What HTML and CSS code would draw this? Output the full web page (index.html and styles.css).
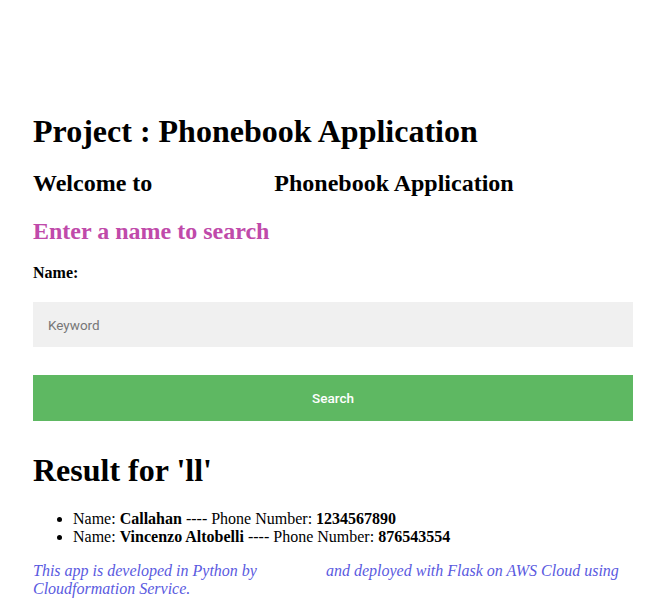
FILE: index.html
```html
<!DOCTYPE html>
<html>
<head>
<meta charset="utf-8">
<link rel="stylesheet" href="styles.css">
</head>
<body>
<div class="page">
  <h1 class="title">Project : Phonebook Application</h1>
  <h2 class="welcome">Welcome to <span class="gap-lg"></span> Phonebook Application</h2>
  <h3 class="prompt">Enter a name to search</h3>
  <form class="search">
    <label class="label">Name:</label>
    <input class="field" type="text" placeholder="Keyword">
    <button class="btn" type="button">Search</button>
  </form>
  <h1 class="result">Result for 'll'</h1>
  <ul class="list">
    <li>Name: <b>Callahan</b> ---- Phone Number: <b>1234567890</b></li>
    <li>Name: <b>Vincenzo Altobelli</b> ---- Phone Number: <b>876543554</b></li>
  </ul>
  <p class="footer">This app is developed in Python by<span class="gap-sm"></span>and deployed with Flask on AWS Cloud using Cloudformation Service.</p>
</div>
</body>
</html>
```

FILE: styles.css
```css
html, body {
  margin: 0;
  padding: 0;
  background: #fff;
}
body {
  font-family: "Liberation Serif", "Times New Roman", serif;
  color: #000;
}
.page {
  width: 600px;
  padding: 92px 0 0 33px;
}
.title {
  font-size: 32px;
  margin: 21px 0 20px;
}
.welcome {
  font-size: 24px;
  margin: 20px 0 21px;
}
.gap-lg {
  display: inline-block;
  width: 110px;
}
.prompt {
  font-size: 24px;
  color: #c04aaa;
  margin: 20px 0 19px;
}
.search {
  display: flex;
  flex-direction: column;
}
.label {
  font-weight: bold;
  font-size: 16px;
  margin: 0 0 20px;
}
.field {
  height: 45px;
  box-sizing: border-box;
  border: none;
  background: #f0f0f0;
  padding: 0 15px;
  font-family: Roboto, "Liberation Sans", Arial, sans-serif;
  font-size: 13.5px;
  outline: none;
}
.field::placeholder {
  color: #777;
}
.btn {
  margin-top: 28px;
  height: 46px;
  border: none;
  background: #5eb862;
  color: #fff;
  font-family: Roboto, "Liberation Sans", Arial, sans-serif;
  font-size: 13.5px;
  font-weight: 500;
}
.result {
  font-size: 32px;
  margin: 31px 0 21px;
}
.list {
  margin: 16px 0;
  padding-left: 40px;
  font-size: 16px;
}
.footer {
  font-style: italic;
  font-size: 16px;
  color: #5a5adf;
  margin: 16px 0;
}
.gap-sm {
  display: inline-block;
  width: 69px;
}
```
